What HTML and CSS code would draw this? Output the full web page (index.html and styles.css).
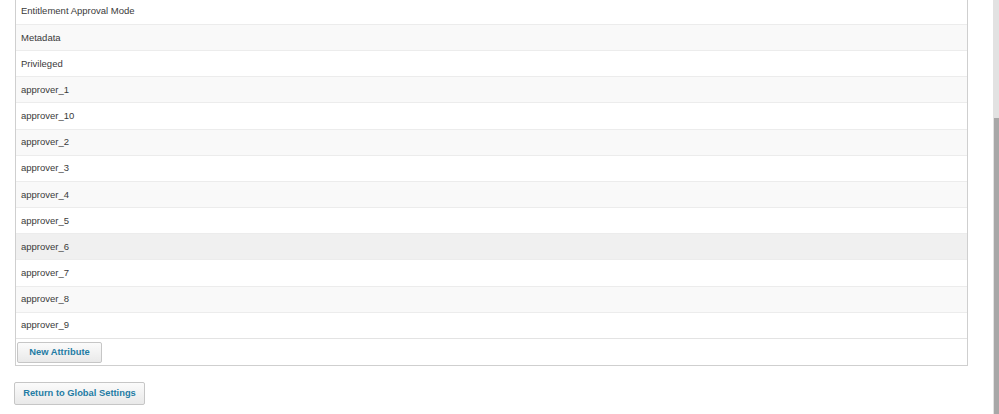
FILE: index.html
```html
<!DOCTYPE html>
<html>
<head>
    <link rel="stylesheet" href="styles.css">
</head>
<body>
    <div class="page">
        <div class="panel">
            <table class="attr-table">
                <tr><td>Entitlement Approval Mode</td></tr>
                <tr><td>Metadata</td></tr>
                <tr><td>Privileged</td></tr>
                <tr><td>approver_1</td></tr>
                <tr><td>approver_10</td></tr>
                <tr><td>approver_2</td></tr>
                <tr><td>approver_3</td></tr>
                <tr><td>approver_4</td></tr>
                <tr><td>approver_5</td></tr>
                <tr class="hover"><td>approver_6</td></tr>
                <tr><td>approver_7</td></tr>
                <tr><td>approver_8</td></tr>
                <tr><td>approver_9</td></tr>
            </table>
            <div class="panel-footer">
                <button class="btn btn-new">New Attribute</button>
            </div>
        </div>
        <div class="actions">
            <button class="btn btn-return">Return to Global Settings</button>
        </div>
    </div>
    <!-- page scrollbar, scrolled down -->
    <div class="scrollbar"><div class="scroll-thumb"></div></div>
</body>
</html>
```

FILE: styles.css
```css
body {
    margin: 0;
    font-family: "Liberation Sans", Arial, sans-serif;
    font-size: 9.5px;
    color: #3a3a3a;
    background: #fff;
}
.page {
    padding: 0 31px 0 15px;
}
.panel {
    margin-top: -3.2px;
    border: 1px solid #cfcfcf;
}
.attr-table {
    width: 100%;
    border-collapse: collapse;
}
.attr-table td {
    padding: 4.6px 5px 5.4px 5px;
    line-height: 15.17px;
    border-top: 1px solid #ececec;
}
.attr-table tr:nth-child(even) td { background-color: #f9f9f9; }
.attr-table tr.hover td { background-color: #f0f0f0; }
.panel-footer {
    border-top: 1px solid #e3e3e3;
    padding: 3px 1px 2px 1px;
}
.btn {
    font-family: "Liberation Sans", Arial, sans-serif;
    font-size: 9.35px;
    font-weight: bold;
    color: #1f7ca4;
    background: linear-gradient(#fbfbfb, #e9e9e9);
    border: 1px solid #c6c6c6;
    border-radius: 2px;
    cursor: pointer;
}
.btn-new {
    height: 21px;
    width: 85px;
    padding: 0;
}
.actions {
    padding-top: 16px;
}
.btn-return {
    height: 23px;
    width: 131px;
    padding: 0;
    margin-left: -1px;
}
.scrollbar {
    position: fixed;
    top: 0;
    right: 0;
    width: 6px;
    height: 100%;
    background-color: #e2e2e2;
}
.scroll-thumb {
    margin: 118px 0 0 1px;
    height: 296px;
    background-color: #a8a8a8;
}
```
